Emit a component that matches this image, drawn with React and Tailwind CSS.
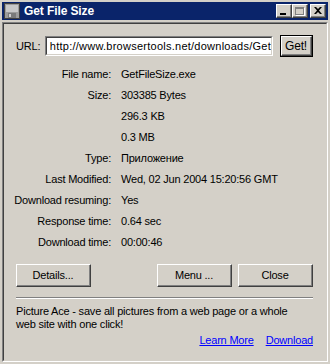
import React from 'react';

const rows = [
  ['File name:', 'GetFileSize.exe'],
  ['Size:', '303385 Bytes'],
  ['', '296.3 KB'],
  ['', '0.3 MB'],
  ['Type:', 'Приложение'],
  ['Last Modified:', 'Wed, 02 Jun 2004 15:20:56 GMT'],
  ['Download resuming:', 'Yes'],
  ['Response time:', '0.64 sec'],
  ['Download time:', '00:00:46'],
];

function WinButton({ children, className = '' }) {
  return (
    <div className={`border-t border-l border-t-white border-l-white border-b border-r border-b-[#404040] border-r-[#404040] ${className}`}>
      <div className="h-full w-full flex items-center justify-center border-b border-r border-b-[#808080] border-r-[#808080] bg-[#d4d0c8]">
        {children}
      </div>
    </div>
  );
}

function TitleButton({ children }) {
  return (
    <WinButton className="w-[16px] h-[14px]">{children}</WinButton>
  );
}

export default function App() {
  return (
    <div
      className="w-[330px] h-[364px] bg-[#d4d0c8] flex flex-col pt-[2px] px-[2px] text-[11px] tracking-[-0.2px] text-black"
      style={{ fontFamily: '"Liberation Sans", Arial, sans-serif' }}
    >
      {/* title bar */}
      <div className="h-[18px] bg-[#0a246a] flex items-center pl-[2px] pr-[2px]">
        <svg width="16" height="16" viewBox="0 0 16 16">
          <rect x="0.5" y="0.5" width="15" height="15" fill="#9c9c9c" stroke="#404040" />
          <rect x="2" y="2" width="12" height="7" fill="#c8c8c8" />
          <rect x="4" y="10" width="8" height="5" fill="#7a7a7a" />
          <rect x="5" y="11" width="2" height="3" fill="#d0d0d0" />
        </svg>
        <span className="ml-[4px] text-white font-bold text-[12px] tracking-[-0.1px] leading-none">Get File Size</span>
        <div className="ml-auto flex items-center tracking-normal">
          <TitleButton>
            <div className="w-[6px] h-[2px] bg-black mt-[6px] mr-[1px]" />
          </TitleButton>
          <TitleButton>
            <div className="w-[9px] h-[8px] border border-t-2 border-[#808080] shadow-[1px_1px_0_white]" />
          </TitleButton>
          <div className="w-[2px]" />
          <TitleButton>
            <svg width="8" height="7" viewBox="0 0 8 7">
              <path d="M0 0 L2 0 L4 2 L6 0 L8 0 L5 3.5 L8 7 L6 7 L4 5 L2 7 L0 7 L3 3.5 Z" fill="black" />
            </svg>
          </TitleButton>
        </div>
      </div>

      {/* client area */}
      <div className="mt-[2px] flex-1 border-t border-l border-t-[#808080] border-l-[#808080] border-b border-r border-b-white border-r-white">
        <div className="h-full border-t border-l border-t-[#404040] border-l-[#404040] border-b border-r border-b-[#d4d0c8] border-r-[#d4d0c8] pl-[12px] pr-[13px] pt-[11px] flex flex-col">
          <div className="flex items-center h-[22px]">
            <span className="w-[30px]">URL:</span>
            <div className="w-[230px] h-[20px] border-t border-l border-t-[#808080] border-l-[#808080] border-b border-r border-b-white border-r-white">
              <div className="h-full bg-white border-t border-l border-t-[#404040] border-l-[#404040] border-b border-r border-b-[#d4d0c8] border-r-[#d4d0c8] flex items-center pl-[3px] overflow-hidden whitespace-nowrap text-[11px] tracking-[0.25px]">
                http://www.browsertools.net/downloads/Get
              </div>
            </div>
            <div className="ml-[7px] border border-black">
              <WinButton className="w-[31px] h-[20px]">
                <span className="text-[12px]">Get!</span>
              </WinButton>
            </div>
          </div>

          <div className="mt-[7px] flex flex-col">
            {rows.map(([label, value], i) => (
              <div key={i} className="h-[21px] flex items-center">
                <div className="w-[95px] flex justify-end">
                  <span className="whitespace-nowrap">{label}</span>
                </div>
                <span className="ml-[10px] whitespace-nowrap">{value}</span>
              </div>
            ))}
          </div>

          <div className="mt-[11px] flex items-center">
            <WinButton className="w-[75px] h-[23px]">Details...</WinButton>
            <WinButton className="ml-auto w-[75px] h-[23px]">Menu ...</WinButton>
            <WinButton className="ml-[6px] w-[75px] h-[23px]">Close</WinButton>
          </div>

          <div className="mt-[10px] border-t border-t-[#808080] border-b border-b-white" />

          <p className="mt-[6px] leading-[13px] pr-[4px]">
            Picture Ace - save all pictures from a web page or a whole web site with one click!
          </p>

          <div className="mt-[3px] flex justify-end gap-[12px] leading-[13px]">
            <span className="text-[#0000ff] underline">Learn More</span>
            <span className="text-[#0000ff] underline">Download</span>
          </div>
        </div>
      </div>
      <div className="h-[2px]" />
    </div>
  );
}
